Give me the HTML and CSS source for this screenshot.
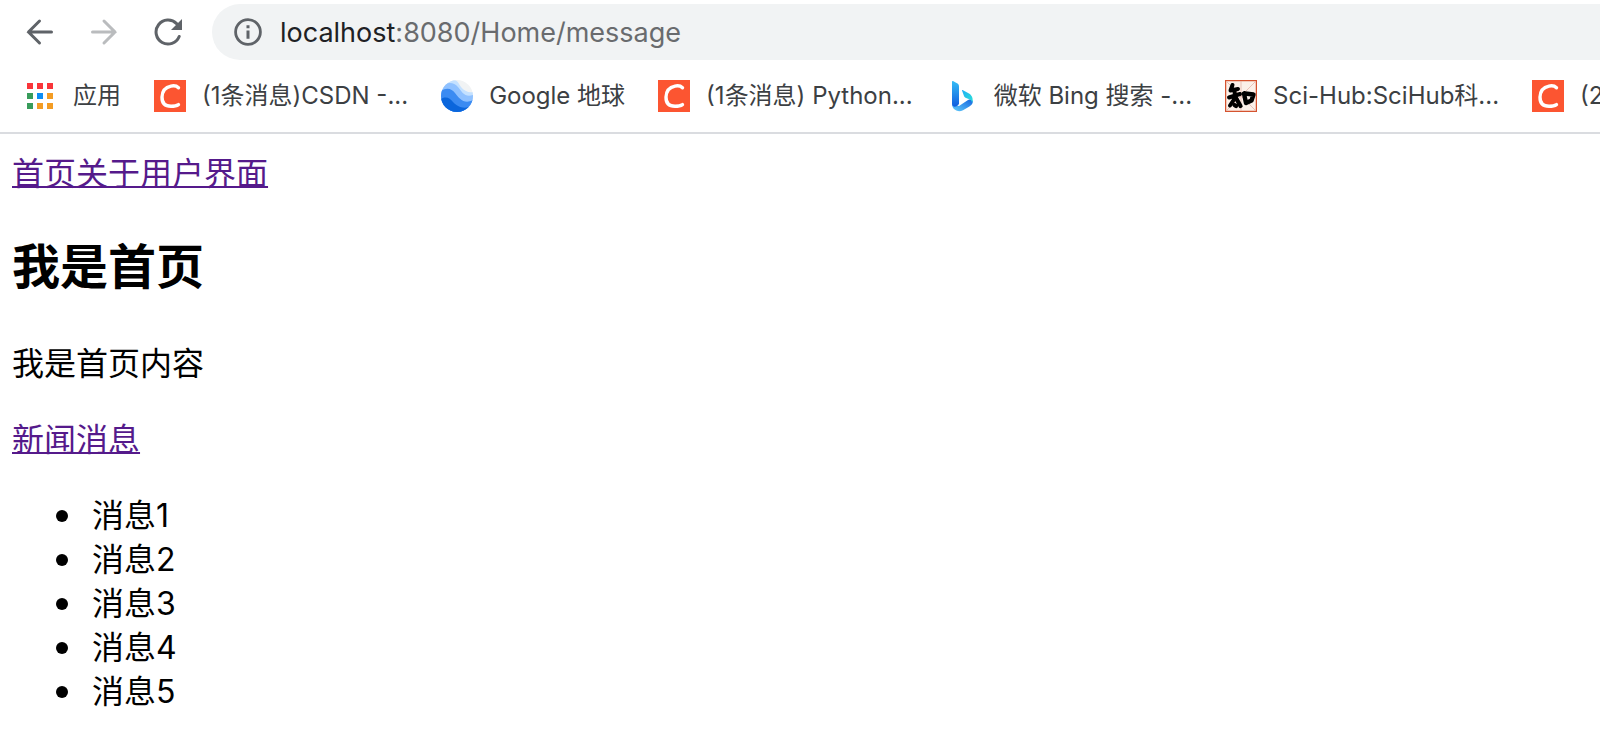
FILE: index.html
```html
<!DOCTYPE html>
<html lang="zh-CN">
<head>
<meta charset="utf-8">
<title>Home</title>
<link rel="stylesheet" href="styles.css">
</head>
<body>
<svg class="defs" aria-hidden="true">
  <symbol id="csdn" viewBox="0 0 32 32">
    <rect width="32" height="32" fill="#fc5531"/>
    <path d="M24.500 7.800C22.500 5.800 19.800 5.500 17 6.100C11.200 7.300 8.200 11.500 8 17C7.900 23 11.300 26.200 17 26.300C20.500 26.300 22.500 26 24.500 24.600" fill="none" stroke="#fff" stroke-width="3.400" stroke-linecap="round"/>
  </symbol>
</svg>
<header class="browser">
  <div class="toolbar">
    <button class="nav" type="button" aria-label="后退"><svg viewBox="0 0 28 28"><path d="M25.500 14H2.500M13.500 3L2.500 14L13.500 25"/></svg></button>
    <button class="nav nav-off" type="button" aria-label="前进"><svg viewBox="0 0 28 28"><path d="M2.500 14H25M14 3L25 14L14 25"/></svg></button>
    <button class="nav" type="button" aria-label="刷新"><svg viewBox="0 0 28 28"><path d="M25.200 18.500A12 12 0 1 1 22.600 5.600"/><path class="solid" d="M28 1V12H17Z"/></svg></button>
    <div class="address">
      <svg class="info" viewBox="0 0 28 28"><circle cx="14" cy="14" r="12.400" fill="none" stroke="#5f6368" stroke-width="2.800"/><path d="M12.500 7.200h3v3h-3zM12.500 12.400h3v8.400h-3z" fill="#5f6368"/></svg>
      <span class="url"><span class="host">localhost</span>:8080/Home/message</span>
    </div>
  </div>
  <nav class="bookmarks">
    <a class="bookmark apps" href="#"><svg viewBox="0 0 26 26"><path fill="#f9353a" d="M0 0h6v6H0zM10 0h6v6h-6zM20 0h6v6h-6z"/><path fill="#389c5b" d="M0 10h6v6H0zM0 20h6v6H0z"/><path fill="#0d8df5" d="M10 10h6v6h-6z"/><path fill="#f39c24" d="M20 10h6v6h-6zM10 20h6v6h-6zM20 20h6v6h-6z"/></svg>应用</a>
    <a class="bookmark" href="#"><svg><use href="#csdn"/></svg>(1条消息)CSDN -...</a>
    <a class="bookmark" href="#"><svg viewBox="0 0 32 32"><defs><clipPath id="globe"><circle cx="16" cy="16" r="16"/></clipPath></defs><g clip-path="url(#globe)"><path fill="#f1f3f4" d="M0 0h32v32H0z"/><path fill="#c4e1ff" d="M0 0H12C17 0 17 3 20 7C23 11 28 13 32 12V32H0Z"/><path fill="#8fc1ff" d="M0 6C6 2 13 2 17 7C21 12 24 18 32 15V32H0Z"/><path fill="#3b8bf2" d="M0 11C6 7 11 9 14 13C18 18 23 25 32 20V32H0Z"/><path fill="#0b66dc" d="M0 19C5 16 9 18 12 22C16 26 21 29 28 27V32H0Z"/></g></svg>Google 地球</a>
    <a class="bookmark" href="#"><svg><use href="#csdn"/></svg>(1条消息) Python...</a>
    <a class="bookmark" href="#"><svg viewBox="0 0 32 32"><defs><linearGradient id="stem" x2="0" y2="1"><stop stop-color="#35bdf5"/><stop offset="1" stop-color="#105cdf"/></linearGradient><linearGradient id="bowl" x1="0" x2="1" y1="1" y2="0"><stop stop-color="#62cdfb"/><stop offset="1" stop-color="#1263df"/></linearGradient><linearGradient id="leaf" x2="1" y2="1"><stop stop-color="#20aef5"/><stop offset="1" stop-color="#2ce2d7"/></linearGradient></defs><path fill="url(#bowl)" d="M6 24L13 26L22 20C25 18 27 20 26.800 22C26.500 24 25 25.500 23 26.700L17 30.200C14 31.700 11 31.300 9 29.700C7 28.500 6 26.500 6 24Z"/><path fill="url(#stem)" d="M6 1.500C6 1 6.400 .8 7 1L11 3.200C12.300 4 13 4.800 13 6.500V24C11 27 6.500 28 6 24Z"/><path fill="url(#leaf)" d="M16 10.600C15.700 10 16.200 9.900 17 10.200L23 13.400C26.500 15.500 27.500 19.500 26 23C26 20 24 19.600 22 18.800L19.500 17.700C18.500 17.200 18.200 16.500 18 16Z"/></svg>微软 Bing 搜索 -...</a>
    <a class="bookmark" href="#"><svg viewBox="0 0 32 32"><rect x=".6" y=".6" width="30.800" height="30.800" fill="#fbf0e9" stroke="#d5532f" stroke-width="1.300"/><path d="M1 1L31 31M31 1L1 31M16 1V31" stroke="#e4b5a9" stroke-width=".8"/><g fill="none" stroke="#000" stroke-linecap="round" stroke-linejoin="round"><path stroke-width="4" d="M7.500 5L5.500 10.500L13 9M4 17.500L15 14M9.500 10L10 18L5 25.500"/><path stroke-width="4.300" d="M11 18L15.500 26M9.500 25L11 26"/><path stroke-width="4.400" d="M19 13.500L21 23L26.500 20.500L28.500 14.500L20 13.500"/></g></svg>Sci-Hub:SciHub科...</a>
    <a class="bookmark" href="#"><svg><use href="#csdn"/></svg>(2</a>
  </nav>
</header>
<main class="page">
  <a class="link" href="#">首页</a><a class="link" href="#">关于</a><a class="link" href="#">用户界面</a>
  <h2>我是首页</h2>
  <p>我是首页内容</p>
  <a class="link" href="#">新闻</a><a class="link" href="#">消息</a>
  <ul>
    <li>消息1</li>
    <li>消息2</li>
    <li>消息3</li>
    <li>消息4</li>
    <li>消息5</li>
  </ul>
</main>
</body>
</html>
```
FILE: styles.css
```css
* { box-sizing: border-box; }
body {
  margin: 0;
  background: #fff;
  color: #000;
  font-family: Inter, "Noto Sans CJK SC", sans-serif;
}
.defs { position: absolute; width: 0; height: 0; }
.browser { border-bottom: 2px solid #dadce0; overflow: hidden; }
.toolbar {
  display: flex;
  align-items: center;
  gap: 36px;
  padding: 4px 0 0 26px;
}
.nav {
  flex: none;
  display: flex;
  padding: 0;
  border: 0;
  background: none;
}
.nav svg {
  width: 28px;
  height: 28px;
  fill: none;
  stroke: #5f6368;
  stroke-width: 3;
  stroke-linecap: round;
}
.nav .solid { fill: #5f6368; stroke: none; }
.nav-off svg { stroke: #babcbe; }
.address {
  flex: 1;
  display: flex;
  align-items: center;
  gap: 18px;
  height: 56px;
  margin-left: -6px;
  padding-left: 22px;
  border-radius: 28px 0 0 28px;
  background: #f1f3f4;
}
.info { width: 28px; height: 28px; }
.url { color: #696b6e; font-size: 27px; }
.host { color: #202124; }
.bookmarks {
  display: flex;
  align-items: center;
  gap: 33px;
  height: 72px;
  padding-left: 27px;
}
.bookmark {
  flex: none;
  display: flex;
  align-items: center;
  gap: 16px;
  color: #3c4043;
  font-size: 24px;
  line-height: 32px;
  text-decoration: none;
  white-space: nowrap;
}
.bookmark svg { width: 32px; height: 32px; }
.apps { gap: 20px; }
.apps svg { width: 26px; height: 26px; }
.page {
  padding: 18px 12px;
  font-size: 32px;
  line-height: 44px;
}
.link {
  color: #551a8b;
  text-decoration-thickness: 2px;
  text-decoration-skip-ink: none;
}
h2 { margin: 38px 0 42px; font-size: 48px; line-height: 66px; }
p { margin: 32px 0; }
ul { margin: 32px 0; padding-left: 44px; list-style: none; }
li { display: flex; align-items: center; gap: 24px; }
li::before {
  content: "";
  width: 12px;
  height: 12px;
  border-radius: 50%;
  background: #000;
}
```
